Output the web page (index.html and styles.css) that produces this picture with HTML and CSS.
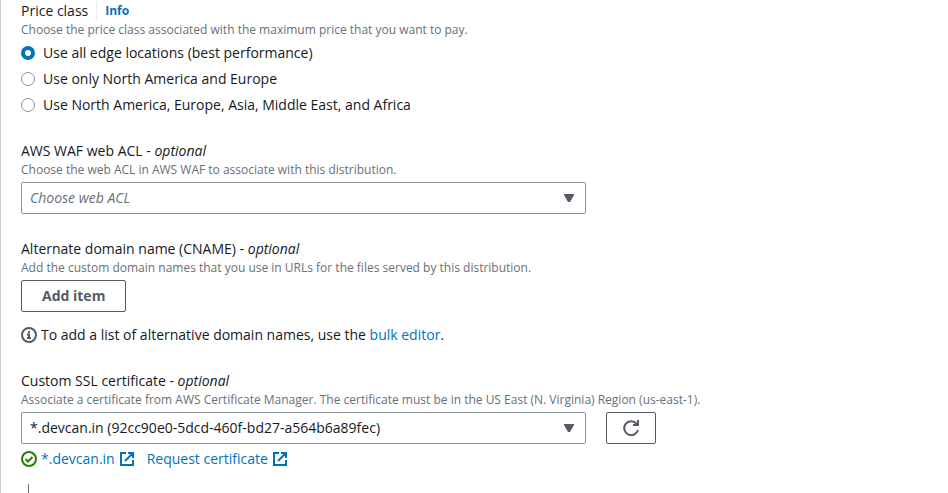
FILE: index.html
```html
<!DOCTYPE html>
<html lang="en">
<head>
<meta charset="utf-8">
<meta name="viewport" content="width=device-width, initial-scale=1">
<title>Distribution settings</title>
<link rel="stylesheet" href="styles.css">
</head>
<body>
<main class="panel">
  <fieldset class="field">
    <legend class="legend">
      <span>Price class</span>
      <a class="info" href="#">Info</a>
    </legend>
    <p class="hint">Choose the price class associated with the maximum price that you want to pay.</p>
    <div class="radios">
      <label class="radio"><input type="radio" name="price" checked>Use all edge locations (best performance)</label>
      <label class="radio"><input type="radio" name="price">Use only North America and Europe</label>
      <label class="radio"><input type="radio" name="price">Use North America, Europe, Asia, Middle East, and Africa</label>
    </div>
  </fieldset>

  <div class="field">
    <label class="label" for="acl">AWS WAF web ACL - <em>optional</em></label>
    <p class="hint">Choose the web ACL in AWS WAF to associate with this distribution.</p>
    <div class="select">
      <select id="acl" class="placeholder"><option>Choose web ACL</option></select>
      <svg class="caret" viewBox="0 0 10 8" aria-hidden="true"><path d="M0 0h10v1L6 8H4L0 1z"/></svg>
    </div>
  </div>

  <div class="field">
    <span class="label">Alternate domain name (CNAME) - <em>optional</em></span>
    <p class="hint">Add the custom domain names that you use in URLs for the files served by this distribution.</p>
    <button class="button add" type="button">Add item</button>
    <p class="note">
      <svg class="icon" viewBox="0 0 16 16" aria-hidden="true"><circle cx="8" cy="8" r="7"/><path d="M6 7.500h2V11M6 11h4M7 5h2"/></svg>
      <span>To add a list of alternative domain names, use the <a href="#">bulk editor</a>.</span>
    </p>
  </div>

  <div class="field">
    <label class="label" for="cert">Custom SSL certificate - <em>optional</em></label>
    <p class="hint">Associate a certificate from AWS Certificate Manager. The certificate must be in the US East (N. Virginia) Region (us-east-1).</p>
    <div class="row">
      <div class="select">
        <select id="cert"><option>*.devcan.in (92cc90e0-5dcd-460f-bd27-a564b6a89fec)</option></select>
        <svg class="caret" viewBox="0 0 10 8" aria-hidden="true"><path d="M0 0h10v1L6 8H4L0 1z"/></svg>
      </div>
      <button class="button refresh" type="button" aria-label="Refresh certificates">
        <svg class="icon" viewBox="0 0 16 16" aria-hidden="true"><path d="M15 10a7 7 0 1 1-1.500-6.500L15 5M15 0v5H10"/></svg>
      </button>
    </div>
    <div class="links">
      <span class="status">
        <svg class="icon ok" viewBox="0 0 16 16" aria-hidden="true"><circle cx="8" cy="8" r="7"/><path d="M4.500 8l2.500 2.500 4.500-4.500"/></svg>
        <a class="external" href="#">*.devcan.in
          <svg class="icon" viewBox="0 0 16 16" aria-hidden="true"><path d="M7 2H2v12h12V9M9 2h5v5M14 2L6 10"/></svg></a>
      </span>
      <a class="external" href="#">Request certificate
        <svg class="icon" viewBox="0 0 16 16" aria-hidden="true"><path d="M7 2H2v12h12V9M9 2h5v5M14 2L6 10"/></svg></a>
    </div>
  </div>
  <div class="branch"></div>
</main>
</body>
</html>
```
FILE: styles.css
```css
* { box-sizing: border-box; }

body {
  margin: 0;
  background: #fff;
  color: #16191f;
  font: 14px/22px "Open Sans", "Noto Sans", sans-serif;
}

a { color: #0073bb; text-decoration: none; }
p { margin: 0; }

.panel {
  display: flex;
  flex-direction: column;
  min-height: 100vh;
  padding: 0 20px;
  border-left: 1px solid #ccc;
}

.field {
  min-width: 0;
  margin: 0;
  padding: 0;
  border: 0;
}
.field + .field { margin-top: 24px; }

.legend { display: flex; gap: 8px; padding: 0; }
.label { display: block; }

.info {
  align-self: center;
  padding-left: 8px;
  border-left: 1px solid #eaeded;
  font-size: 12px;
  line-height: 18px;
  font-weight: 700;
}

.hint {
  margin-bottom: 4px;
  color: #687078;
  font-size: 12px;
  line-height: 16px;
}

.radios { display: grid; gap: 4px; }
.radio { display: flex; align-items: center; gap: 8px; }
.radio input {
  appearance: none;
  width: 14px;
  height: 14px;
  margin: 0;
  border: 1px solid #879596;
  border-radius: 50%;
  background: #fff;
}
.radio input:checked { border: 4px solid #0073bb; }

.select { position: relative; flex: 1; max-width: 565px; }
select {
  appearance: none;
  display: block;
  width: 100%;
  height: 32px;
  padding: 0 32px 0 8px;
  border: 1px solid #879596;
  border-radius: 2px;
  background: #fff;
  color: inherit;
  font: inherit;
}
.placeholder { color: #687078; font-style: italic; }
.caret {
  position: absolute;
  top: 12px;
  right: 12px;
  width: 10px;
  height: 8px;
  fill: #545b64;
  pointer-events: none;
}

.button {
  height: 32px;
  border: 1px solid #545b64;
  border-radius: 2px;
  background: #fff;
  color: #545b64;
  font: inherit;
  font-weight: 700;
}
.add { display: block; padding: 0 20px; }
.refresh { display: grid; place-items: center; width: 50px; padding: 0; }

.icon {
  flex: none;
  width: 16px;
  height: 16px;
  fill: none;
  stroke: currentColor;
  stroke-width: 2;
}
.ok { color: #1d8102; }

.note { display: flex; align-items: center; gap: 4px; margin-top: 12px; }
.note .icon { color: #545b64; }
.row { display: flex; gap: 20px; }
.links { display: flex; gap: 12px; margin-top: 4px; }
.status, .external { display: flex; align-items: center; gap: 4px; }

.branch {
  flex: 1;
  min-height: 8px;
  margin: 14px 0 0 7px;
  border-left: 1px solid #687078;
}
```
